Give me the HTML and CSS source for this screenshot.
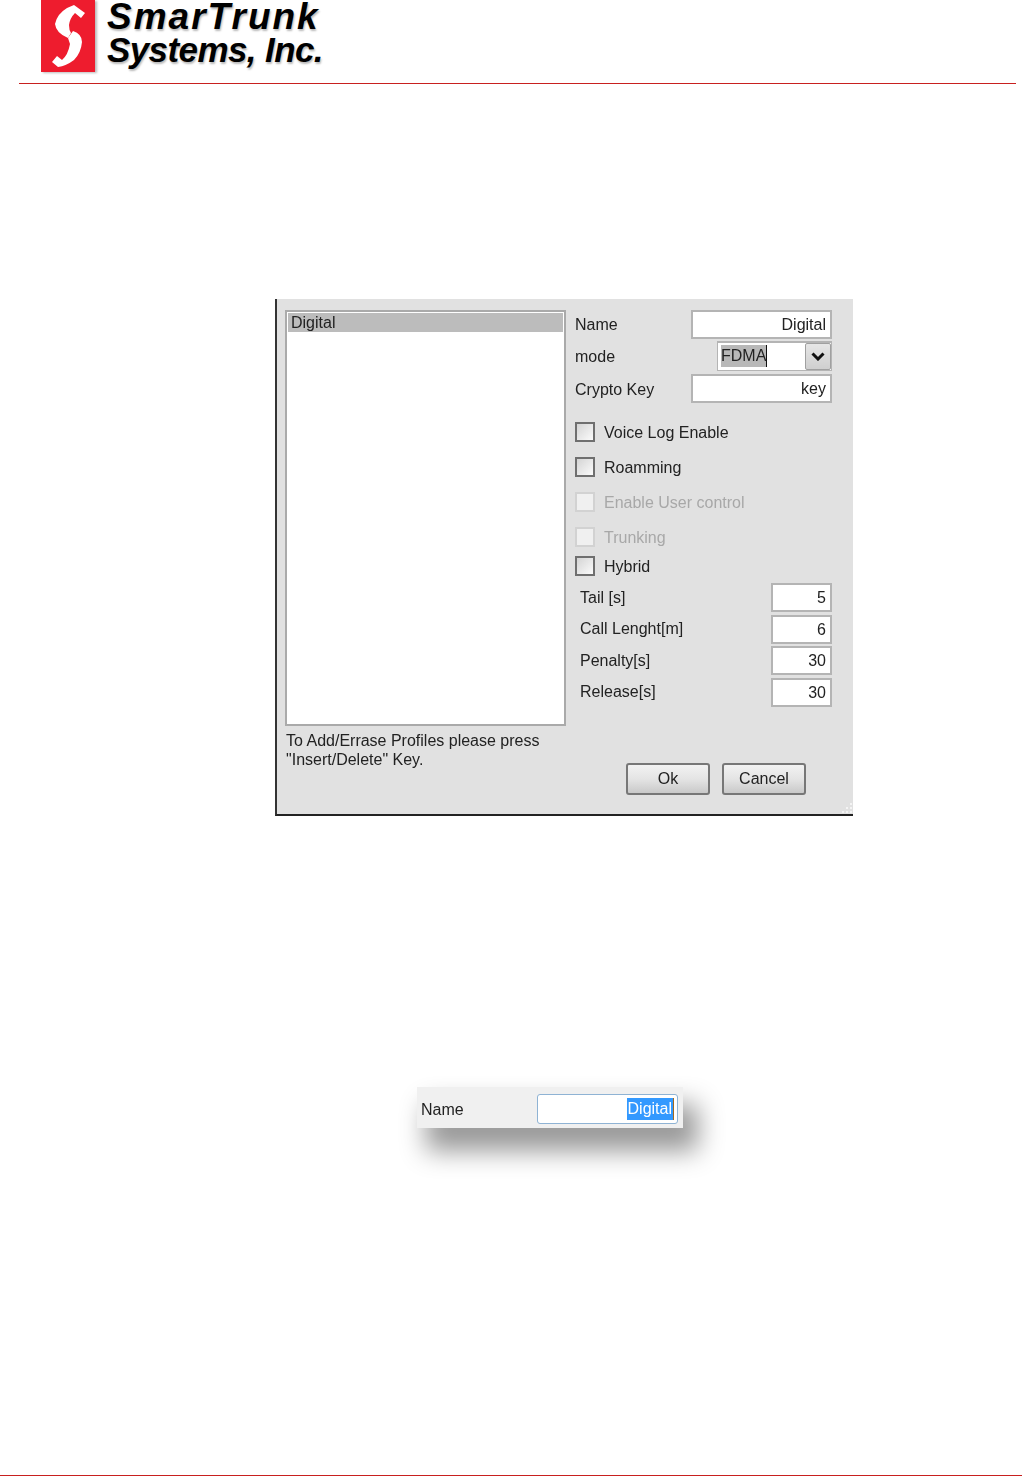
FILE: index.html
```html
<!DOCTYPE html>
<html lang="en">
<head>
    <meta charset="UTF-8">
    <title>SmarTrunk Systems - Profile settings</title>
    <link rel="stylesheet" href="styles.css">
</head>
<body>
<div class="header">
    <svg class="logo-mark" viewBox="0 0 56 73" width="56" height="73">
        <rect x="0" y="0" width="54" height="72" fill="#ee1c2e"/>
        <path fill="#fff" d="M33,5 L44,13 L40,18 L34,13 Q29,18 28,25 Q28,30 30,33 L27,38 Q15,33 14,24 Q16,14 26,8 Z"/>
        <path fill="#fff" d="M32,31 Q41,34 41,42 Q40,53 33,60 Q25,66 17,67 L11,62 L16,56 L21,60 Q27,55 29,44 L27,38 Z"/>
    </svg>
    <div class="logo-text">
        <div class="logo-top">SmarTrunk</div>
        <div class="logo-bottom">Systems, Inc.</div>
    </div>
</div>

<div class="dialog">
    <div class="left-col">
        <div class="list">
            <div class="list-item">Digital</div>
        </div>
        <div class="note">To Add/Errase Profiles please press<br>"Insert/Delete" Key.</div>
    </div>
    <div class="right-col">
        <div class="row">
            <span>Name</span>
            <div class="field wide">Digital</div>
        </div>
        <div class="row">
            <span>mode</span>
            <div class="combo">
                <span class="combo-text"><span class="selected">FDMA</span></span>
                <span class="combo-btn">
                    <svg viewBox="0 0 14 9" width="14" height="9"><path d="M1.5,1.5 L7,7 L12.5,1.5" fill="none" stroke="#111" stroke-width="3"/></svg>
                </span>
            </div>
        </div>
        <div class="row">
            <span class="crypto-label">Crypto Key</span>
            <div class="field wide">key</div>
        </div>

        <div class="checks">
            <div class="check"><i class="box"></i>Voice Log Enable</div>
            <div class="check"><i class="box"></i>Roamming</div>
            <div class="check off"><i class="box"></i>Enable User control</div>
            <div class="check off short"><i class="box"></i>Trunking</div>
            <div class="check short"><i class="box"></i>Hybrid</div>
        </div>

        <div class="numbers">
            <div class="row"><span>Tail [s]</span><div class="field small">5</div></div>
            <div class="row"><span>Call Lenght[m]</span><div class="field small">6</div></div>
            <div class="row"><span>Penalty[s]</span><div class="field small">30</div></div>
            <div class="row"><span>Release[s]</span><div class="field small">30</div></div>
        </div>

        <div class="buttons">
            <div class="btn">Ok</div>
            <div class="btn">Cancel</div>
        </div>
    </div>
    <svg class="grip" viewBox="0 0 12 12" width="12" height="12">
        <rect x="9" y="1" width="2" height="2" fill="#f4f4f4"/>
        <rect x="5" y="5" width="2" height="2" fill="#f4f4f4"/>
        <rect x="9" y="5" width="2" height="2" fill="#f4f4f4"/>
        <rect x="1" y="9" width="2" height="2" fill="#f4f4f4"/>
        <rect x="5" y="9" width="2" height="2" fill="#f4f4f4"/>
        <rect x="9" y="9" width="2" height="2" fill="#f4f4f4"/>
    </svg>
</div>

<div class="name-panel">
    <span class="name-label">Name</span>
    <div class="name-field"><span class="name-selected">Digital</span></div>
</div>

<div class="footer"></div>
</body>
</html>
```

FILE: styles.css
```css
*{
    margin: 0;
    padding: 0;
    box-sizing: border-box;
}
body{
    width: 1022px;
    height: 1476px;
    background: #fff;
    font-family: "Liberation Sans", Arial, sans-serif;
    font-size: 16px;
    color: #222;
    display: flex;
    flex-direction: column;
    overflow: hidden;
}
.header{
    height: 84px;
    margin: 0 6px 0 19px;
    padding-left: 22px;
    border-bottom: 1px solid #c8201f;
    display: flex;
    align-items: flex-start;
}
.logo-mark{
    filter: drop-shadow(2px 1px 1px #bbb) blur(.3px);
}
.logo-text{
    margin-left: 10px;
    line-height: 33px;
    font-weight: bold;
    font-style: italic;
    color: #000;
    text-shadow: 1px 2px 2px #bbb;
}
.logo-top{
    font-size: 37px;
    letter-spacing: 2px;
}
.logo-bottom{
    font-size: 35px;
    letter-spacing: -.6px;
}
.dialog{
    position: relative;
    width: 578px;
    height: 517px;
    margin: 215px 0 0 275px;
    padding: 11px 21px 0 8px;
    background: #e1e1e1;
    border-left: 2px solid #333;
    border-bottom: 2px solid #222;
    display: flex;
    gap: 9px;
    filter: blur(.35px);
}
.left-col{
    width: 281px;
}
.list{
    height: 416px;
    background: #fff;
    border: 2px solid #aaa;
    padding: 1px;
}
.list-item{
    height: 19px;
    line-height: 19px;
    padding-left: 3px;
    background: #bcbcbc;
}
.note{
    margin-top: 5px;
    padding-left: 1px;
    line-height: 19px;
}
.right-col{
    width: 257px;
    display: flex;
    flex-direction: column;
}
.row{
    display: flex;
    justify-content: space-between;
    align-items: center;
    margin-bottom: 3px;
}
.field{
    height: 29px;
    line-height: 26px;
    padding-right: 4px;
    text-align: right;
    background: #fff;
    border: 2px solid #b4b4b4;
}
.wide{
    width: 141px;
}
.small{
    width: 61px;
}
.combo{
    width: 115px;
    height: 30px;
    margin-top: -1px;
    background: #fff;
    border: 1px solid #b4b4b4;
    border-top-width: 2px;
    display: flex;
    justify-content: space-between;
}
.combo-text{
    padding: 2px 0 0 3px;
    line-height: 22px;
}
.selected{
    display: inline-block;
    background: #b8b8b8;
    border-right: 1px solid #111;
}
.combo-btn{
    width: 26px;
    height: 27px;
    background: linear-gradient(#e6e6e6, #cfcfcf);
    border: 1px solid #a0a0a0;
    border-radius: 2px;
    display: flex;
    align-items: center;
    justify-content: center;
}
.crypto-label{
    padding-top: 2px;
}
.checks{
    margin-top: 16px;
}
.check{
    height: 35px;
    display: flex;
    align-items: flex-start;
    gap: 9px;
    line-height: 21px;
}
.check.short{
    height: 29px;
}
.check.short:last-child{
    height: 27px;
}
.box{
    width: 20px;
    height: 20px;
    background: linear-gradient(135deg, #d4d4d4, #fbfbfb);
    border: 2px solid #6f6f6f;
}
.off{
    color: #a8a8a8;
}
.off .box{
    background: #f0f0f0;
    border-color: #d2d2d2;
}
.numbers .row{
    padding-left: 5px;
    margin-bottom: 2.6px;
}
.buttons{
    margin-top: 54px;
    padding-right: 26px;
    display: flex;
    justify-content: flex-end;
    gap: 12px;
}
.btn{
    width: 84px;
    height: 32px;
    line-height: 28px;
    text-align: center;
    background: linear-gradient(#f2f2f2, #e4e4e4 50%, #c9c9c9);
    border: 2px solid #777;
    border-radius: 3px;
}
.grip{
    position: absolute;
    right: 0;
    bottom: 0;
}
.name-panel{
    width: 266px;
    height: 41px;
    margin: 271px 0 0 417px;
    padding: 7px 5px 4px 4px;
    background: #f0f0f0;
    box-shadow: 12px 20px 26px 3px #999;
    display: flex;
    justify-content: space-between;
    align-items: center;
    filter: blur(.35px);
}
.name-label{
    padding-top: 2px;
}
.name-field{
    width: 141px;
    height: 30px;
    padding-right: 3px;
    background: #fff;
    border: 1px solid #8fb3d4;
    border-radius: 3px;
    display: flex;
    justify-content: flex-end;
    align-items: center;
}
.name-selected{
    line-height: 22px;
    padding: 0 1px;
    background: #3399ff;
    color: #fff;
    border-right: 1px solid #a06a20;
}
.footer{
    height: 1px;
    margin-top: auto;
    background: #c8201f;
}
```
